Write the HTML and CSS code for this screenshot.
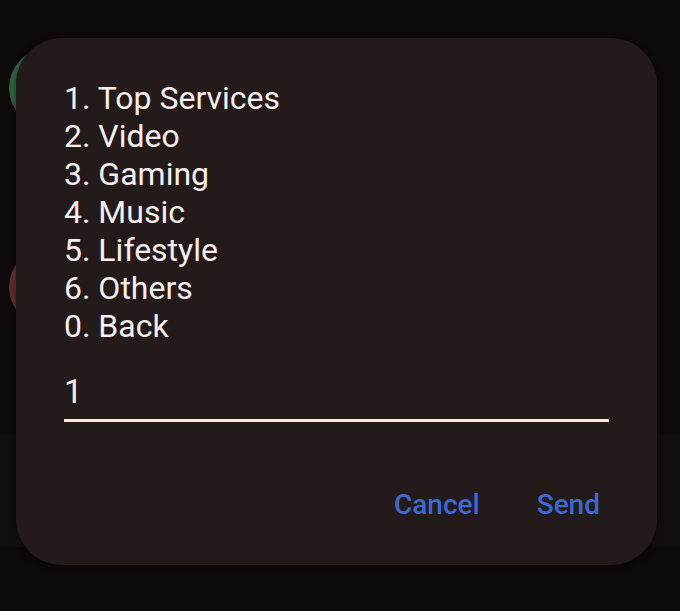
FILE: index.html
```html
<!DOCTYPE html>
<html lang="en">
<head>
<meta charset="utf-8">
<title>USSD</title>
<link rel="stylesheet" href="styles.css">
</head>
<body>
<div class="screen">
  <div class="backdrop">
    <span class="dot dot-green"></span>
    <span class="dot dot-red"></span>
    <div class="band"></div>
  </div>
  <div class="dialog">
    <div class="menu">
      <div class="line">1. Top Services</div>
      <div class="line">2. Video</div>
      <div class="line">3. Gaming</div>
      <div class="line">4. Music</div>
      <div class="line">5. Lifestyle</div>
      <div class="line">6. Others</div>
      <div class="line">0. Back</div>
    </div>
    <div class="field">
      <div class="field-value">1</div>
    </div>
    <div class="actions">
      <span class="btn">Cancel</span>
      <span class="btn">Send</span>
    </div>
  </div>
</div>
</body>
</html>
```
FILE: styles.css
```css
html, body {
  margin: 0;
  padding: 0;
}
body {
  background: #0e0a0a;
  font-family: Roboto, "Noto Sans", sans-serif;
  width: 680px;
  height: 611px;
  overflow: hidden;
}
.screen {
  position: relative;
  width: 680px;
  height: 611px;
  padding-top: 38px;
  box-sizing: border-box;
}
.backdrop {
  position: absolute;
  inset: 0;
  pointer-events: none;
}
.band {
  position: absolute;
  left: 0;
  right: 0;
  top: 435px;
  height: 112px;
  background: #130e0e;
}
.dot {
  position: absolute;
  width: 80px;
  height: 80px;
  border-radius: 50%;
}
.dot-green {
  left: 9px;
  top: 48px;
  background: #2b6440;
}
.dot-red {
  left: 9px;
  top: 247px;
  background: #5e2e29;
}
.dialog {
  position: relative;
  margin-left: 16px;
  width: 641px;
  height: 527px;
  box-sizing: border-box;
  background: #231a1a;
  border-radius: 46px;
  padding: 41px 48px 0 48px;
  display: flex;
  flex-direction: column;
  box-shadow: 0 2px 6px rgba(0, 0, 0, 0.4);
}
.menu {
  color: #f7efee;
  font-size: 32px;
  line-height: 38px;
}
.field {
  margin-top: 27px;
  width: 545px;
  border-bottom: 3px solid #fde6de;
  padding-bottom: 7px;
}
.field-value {
  color: #f7efee;
  font-size: 33px;
  line-height: 40px;
}
.actions {
  display: flex;
  justify-content: flex-end;
  gap: 57px;
  margin-top: 65px;
  padding-right: 9px;
}
.btn {
  color: #3b68d6;
  font-size: 28px;
  font-weight: 500;
  line-height: 36px;
}
```
